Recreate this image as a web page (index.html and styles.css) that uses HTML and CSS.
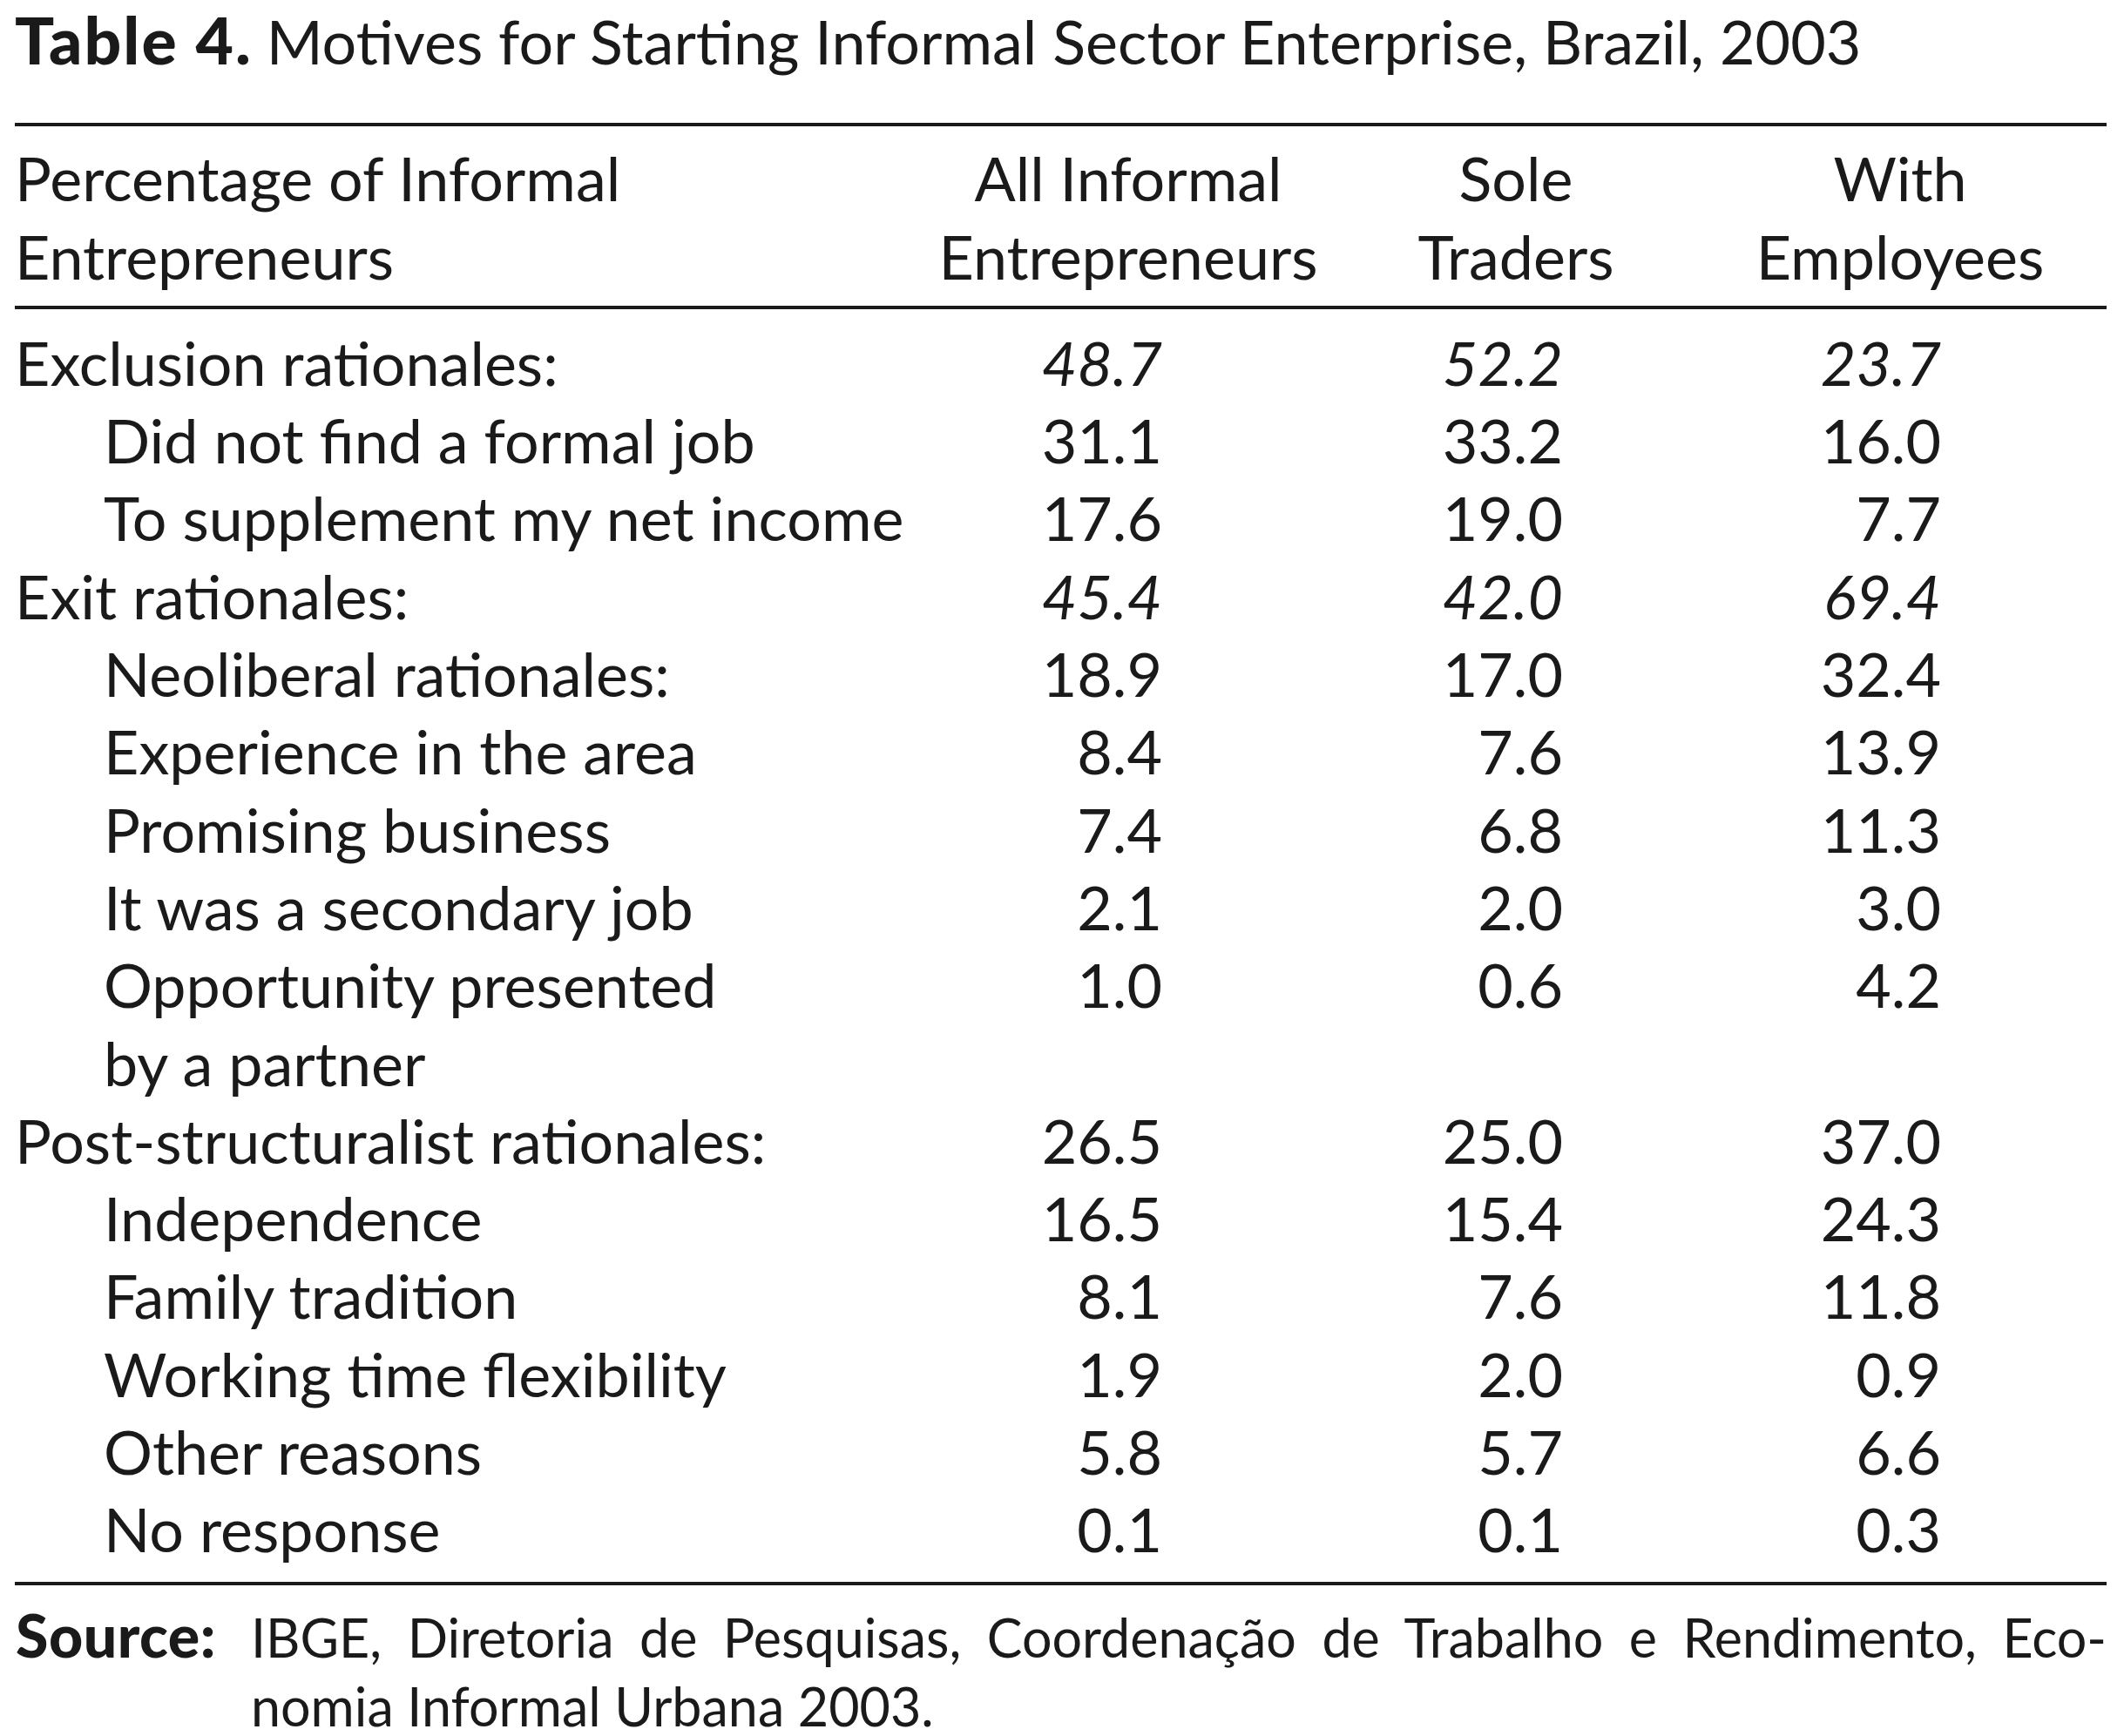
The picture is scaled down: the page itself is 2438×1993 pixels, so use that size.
FILE: index.html
```html
<!DOCTYPE html>
<html lang="en">
<head>
<meta charset="utf-8">
<title>Table 4. Motives for Starting Informal Sector Enterprise, Brazil, 2003</title>
<link rel="stylesheet" href="styles.css">
</head>
<body>
<div class="page">
  <h1 class="title"><b>Table 4.</b> Motives for Starting Informal Sector Enterprise, Brazil, 2003</h1>
  <table class="data">
    <colgroup>
      <col class="col-label">
      <col class="col-a">
      <col class="col-b">
      <col class="col-c">
    </colgroup>
    <thead>
      <tr>
        <th class="h-label">Percentage of Informal<br>Entrepreneurs</th>
        <th class="h-num">All Informal<br>Entrepreneurs</th>
        <th class="h-num">Sole<br>Traders</th>
        <th class="h-num h-c">With<br>Employees</th>
      </tr>
    </thead>
    <tbody>
      <tr class="first cat-it">
        <td class="lbl">Exclusion rationales:</td><td class="n a">48.7</td><td class="n b">52.2</td><td class="n c">23.7</td>
      </tr>
      <tr>
        <td class="lbl sub">Did not find a formal job</td><td class="n a">31.1</td><td class="n b">33.2</td><td class="n c">16.0</td>
      </tr>
      <tr>
        <td class="lbl sub">To supplement my net income</td><td class="n a">17.6</td><td class="n b">19.0</td><td class="n c">7.7</td>
      </tr>
      <tr class="cat-it">
        <td class="lbl">Exit rationales:</td><td class="n a">45.4</td><td class="n b">42.0</td><td class="n c">69.4</td>
      </tr>
      <tr>
        <td class="lbl sub">Neoliberal rationales:</td><td class="n a">18.9</td><td class="n b">17.0</td><td class="n c">32.4</td>
      </tr>
      <tr>
        <td class="lbl sub">Experience in the area</td><td class="n a">8.4</td><td class="n b">7.6</td><td class="n c">13.9</td>
      </tr>
      <tr>
        <td class="lbl sub">Promising business</td><td class="n a">7.4</td><td class="n b">6.8</td><td class="n c">11.3</td>
      </tr>
      <tr>
        <td class="lbl sub">It was a secondary job</td><td class="n a">2.1</td><td class="n b">2.0</td><td class="n c">3.0</td>
      </tr>
      <tr>
        <td class="lbl sub">Opportunity presented<br>by a partner</td><td class="n a">1.0</td><td class="n b">0.6</td><td class="n c">4.2</td>
      </tr>
      <tr>
        <td class="lbl">Post-structuralist rationales:</td><td class="n a">26.5</td><td class="n b">25.0</td><td class="n c">37.0</td>
      </tr>
      <tr>
        <td class="lbl sub">Independence</td><td class="n a">16.5</td><td class="n b">15.4</td><td class="n c">24.3</td>
      </tr>
      <tr>
        <td class="lbl sub">Family tradition</td><td class="n a">8.1</td><td class="n b">7.6</td><td class="n c">11.8</td>
      </tr>
      <tr>
        <td class="lbl sub">Working time flexibility</td><td class="n a">1.9</td><td class="n b">2.0</td><td class="n c">0.9</td>
      </tr>
      <tr>
        <td class="lbl sub">Other reasons</td><td class="n a">5.8</td><td class="n b">5.7</td><td class="n c">6.6</td>
      </tr>
      <tr class="last">
        <td class="lbl sub">No response</td><td class="n a">0.1</td><td class="n b">0.1</td><td class="n c">0.3</td>
      </tr>
    </tbody>
  </table>
  <div class="source">
    <span class="source-key">Source:</span>
    <div class="source-text">
      <div class="source-line1">IBGE, Diretoria de Pesquisas, Coordenação de Trabalho e Rendimento, Eco-</div>
      <div class="source-line2">nomia Informal Urbana 2003.</div>
    </div>
  </div>
</div>
</body>
</html>
```

FILE: styles.css
```css
html, body {
  margin: 0;
  padding: 0;
  background: #ffffff;
}

body {
  color: #1a1a1a;
  font-family: Lato, "Open Sans", sans-serif;
  font-size: 70px;
  line-height: 89.3px;
}

.page {
  margin-left: 17px;
  width: 2401px;
  padding-top: 3px;
}

.title {
  margin: 0;
  height: 89.3px;
  font-size: 70px;
  line-height: 89.3px;
  font-weight: 400;
  letter-spacing: 0;
  white-space: nowrap;
}

.title b {
  font-weight: 900;
  font-size: 75px;
  line-height: 60px;
  letter-spacing: 2px;
  margin-right: -2px;
}

.data {
  width: 2401px;
  margin-top: 49px;
  table-layout: fixed;
  border-collapse: separate;
  border-spacing: 0;
  border-top: 4px solid #1a1a1a;
  border-bottom: 4px solid #1a1a1a;
}

.col-label { width: 1055px; }
.col-a { width: 446px; }
.col-b { width: 444px; }
.col-c { width: 456px; }

.data th {
  font-weight: 400;
  padding: 15px 0 12px;
  border-bottom: 4px solid #1a1a1a;
  vertical-align: top;
  white-space: nowrap;
}

.h-label {
  text-align: left;
  padding-left: 1px;
}

.h-num {
  text-align: center;
}

.h-num.h-c {
  padding-right: 18px;
}

.data td {
  padding: 0;
  vertical-align: top;
  white-space: nowrap;
}

.data tr.first td {
  padding-top: 17px;
}

.data tr.last td {
  padding-bottom: 15px;
}

.lbl {
  text-align: left;
  padding-left: 1px;
}

.data td.lbl.sub {
  padding-left: 102px;
}

.n {
  text-align: right;
}

.data td.n.a { padding-right: 184px; }
.data td.n.b { padding-right: 168px; }
.data td.n.c { padding-right: 190px; }

.data tr.cat-it td.n {
  font-style: italic;
}

.source {
  display: grid;
  grid-template-columns: 271px 1fr;
  align-items: baseline;
  margin-top: 17px;
  font-size: 61px;
  line-height: 79px;
}

.source-key {
  font-weight: 900;
  font-size: 68px;
  letter-spacing: 0.5px;
  padding-left: 1px;
}

.source-line1 {
  text-align: justify;
  text-align-last: justify;
  white-space: nowrap;
}
```
